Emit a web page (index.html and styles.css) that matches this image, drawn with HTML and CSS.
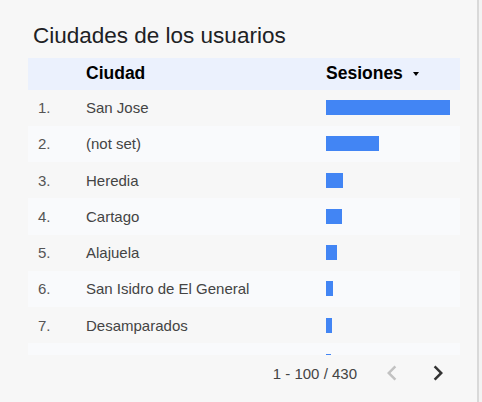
FILE: index.html
```html
<!DOCTYPE html>
<html lang="es">
<head>
<meta charset="utf-8">
<title>Ciudades de los usuarios</title>
<link rel="stylesheet" href="styles.css">
</head>
<body>
<div class="page">
  <h1 class="title">Ciudades de los usuarios</h1>
  <div class="table">
    <div class="row head">
      <div class="c-num"></div>
      <div class="c-city">Ciudad</div>
      <div class="c-val">Sesiones <span class="sort"></span></div>
    </div>
    <div class="body">
      <div class="row"><div class="c-num">1.</div><div class="c-city">San Jose</div><div class="c-val"><span class="bar" style="width:124px"></span></div></div>
      <div class="row alt"><div class="c-num">2.</div><div class="c-city">(not set)</div><div class="c-val"><span class="bar" style="width:53px"></span></div></div>
      <div class="row"><div class="c-num">3.</div><div class="c-city">Heredia</div><div class="c-val"><span class="bar" style="width:17px"></span></div></div>
      <div class="row alt"><div class="c-num">4.</div><div class="c-city">Cartago</div><div class="c-val"><span class="bar" style="width:16px"></span></div></div>
      <div class="row"><div class="c-num">5.</div><div class="c-city">Alajuela</div><div class="c-val"><span class="bar" style="width:11px"></span></div></div>
      <div class="row alt"><div class="c-num">6.</div><div class="c-city">San Isidro de El General</div><div class="c-val"><span class="bar" style="width:7px"></span></div></div>
      <div class="row"><div class="c-num">7.</div><div class="c-city">Desamparados</div><div class="c-val"><span class="bar" style="width:6px"></span></div></div>
      <div class="row alt"><div class="c-num">8.</div><div class="c-city">Goicoechea</div><div class="c-val"><span class="bar" style="width:5px"></span></div></div>
    </div>
    <div class="pager">
      <span class="range">1 - 100 / 430</span>
      <svg class="nav prev" viewBox="0 0 24 24" width="30" height="30"><path d="M15.41 7.41L14 6l-6 6 6 6 1.41-1.41L10.83 12z"/></svg>
      <svg class="nav next" viewBox="0 0 24 24" width="30" height="30"><path d="M10 6L8.59 7.41 13.17 12l-4.58 4.59L10 18l6-6z"/></svg>
    </div>
  </div>
</div>
</body>
</html>
```
FILE: styles.css
```css
html, body {
  margin: 0;
  padding: 0;
}
body {
  width: 482px;
  height: 402px;
  background: #f3f3f3;
  font-family: "Liberation Sans", Arial, sans-serif;
  overflow: hidden;
}
.page {
  width: 479px;
  height: 402px;
  box-sizing: border-box;
  background: #f7f7f7;
  border-right: 2px solid #d9d9d9;
  padding-top: 22.5px;
}
.title {
  margin: 0 0 9.5px 33px;
  font-size: 22.5px;
  line-height: 26px;
  font-weight: normal;
  color: #202124;
}
.table {
  margin-left: 28px;
  width: 432px;
}
.row {
  display: grid;
  grid-template-columns: 58px 240px 134px;
  align-items: center;
  height: 36.25px;
  font-size: 15px;
  color: #444;
}
.row.alt {
  background: #f9fafc;
}
.row.head {
  height: 31.5px;
  background: #ebf1fd;
  font-size: 17.5px;
  font-weight: bold;
  color: #000;
}
.c-num {
  padding-left: 10px;
  color: #555;
}
.c-city {
  white-space: nowrap;
}
.c-val {
  display: flex;
  align-items: center;
}
.sort {
  width: 0;
  height: 0;
  margin-left: 10px;
  border-left: 3px solid transparent;
  border-right: 3px solid transparent;
  border-top: 4px solid #000;
}
.body {
  height: 265.5px;
  overflow: hidden;
}
.bar {
  display: block;
  height: 15px;
  background: #4285f4;
}
.pager {
  display: flex;
  align-items: center;
  justify-content: flex-end;
  height: 36px;
  padding-right: 7px;
  font-size: 15px;
  line-height: 17px;
  color: #444;
}
.range {
  margin-right: 20px;
}
.nav {
  display: block;
}
.prev {
  fill: #c2c2c2;
  margin-right: 16px;
}
.next {
  fill: #333;
}
```
